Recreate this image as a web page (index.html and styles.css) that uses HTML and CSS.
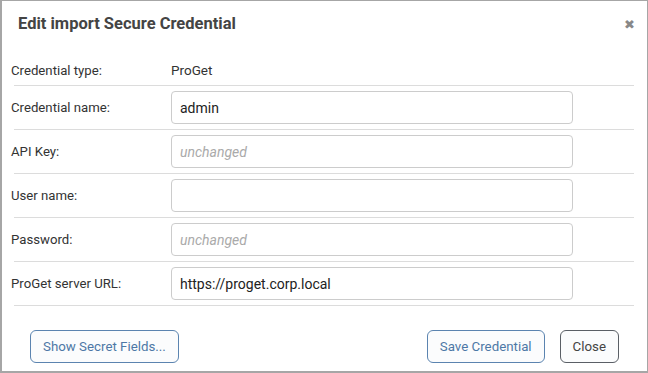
FILE: index.html
```html
<!DOCTYPE html>
<html>
<head>
	<meta charset="utf-8">
	<title>Edit import Secure Credential</title>
	<link rel="stylesheet" href="styles.css">
</head>
<body>
  <div class="dialog">
    <div class="dialog-header">
      <h2>Edit import Secure Credential</h2>
      <span class="close-x">&#x2716;</span>
    </div>

    <div class="dialog-body">
      <div class="row row-static">
        <label>Credential type:</label>
        <span class="value">ProGet</span>
      </div>
      <div class="row">
        <label for="cred_name">Credential name:</label>
        <input type="text" id="cred_name" value="admin">
      </div>
      <div class="row">
        <label for="api_key">API Key:</label>
        <input type="text" id="api_key" placeholder="unchanged">
      </div>
      <div class="row">
        <label for="user_name">User name:</label>
        <input type="text" id="user_name">
      </div>
      <div class="row">
        <label for="password">Password:</label>
        <input type="text" id="password" placeholder="unchanged">
      </div>
      <div class="row">
        <label for="server_url">ProGet server URL:</label>
        <input type="text" id="server_url" value="https://proget.corp.local">
      </div>
    </div>

    <div class="dialog-footer">
      <button class="btn btn-blue">Show Secret Fields...</button>
      <span class="spacer"></span>
      <button class="btn btn-blue">Save Credential</button>
      <button class="btn btn-gray">Close</button>
    </div>
  </div>
</body>
</html>
```

FILE: styles.css
```css
body {
	margin: 0;
	background-color: #fff;
	font-family: Roboto, 'Liberation Sans', sans-serif;
	color: #333;
}

.dialog {
	width: 648px;
	height: 373px;
	box-sizing: border-box;
	border: 1px solid #a6a6a6;
	border-left-width: 2px;
	border-bottom-width: 2px;
	background-color: #fff;
}

.dialog-header {
	display: flex;
	align-items: center;
	height: 45px;
	padding: 0 12px 0 16px;
}

.dialog-header h2 {
	flex: 1;
	margin: 0;
	font-size: 16.5px;
	font-weight: bold;
	color: #444;
}

.close-x {
	font-size: 13px;
	color: #888;
	margin-top: 1px;
}

.dialog-body {
	padding: 9px 13px 0 12px;
}

.row {
	display: flex;
	align-items: center;
	height: 43px;
	border-bottom: 1px solid #dcdcdc;
}

.row-static {
	height: 30px;
}

.row label {
	width: 157px;
	margin-left: -3px;
	margin-right: 3px;
	font-size: 13.2px;
	color: #333;
}

.row .value {
	font-size: 13.5px;
	color: #333;
}

.row input {
	width: 402px;
	height: 33px;
	box-sizing: border-box;
	border: 1px solid #ccc;
	border-radius: 4px;
	padding: 0 8px;
	font-family: Roboto, 'Liberation Sans', sans-serif;
	font-size: 14px;
	color: #222;
}

.row input::placeholder {
	font-style: italic;
	color: #aaa;
}

.dialog-footer {
	display: flex;
	align-items: center;
	gap: 15px;
	padding: 24px 28px 0 28px;
}

.spacer {
	flex: 1;
}

.btn {
	height: 33px;
	padding: 0 12px;
	border-radius: 6px;
	background-color: #fbfcfd;
	font-family: Roboto, 'Liberation Sans', sans-serif;
	font-size: 13.3px;
}

.btn-blue {
	border: 1px solid #5b84b0;
	color: #4d78a6;
}

.btn-gray {
	border: 1px solid #5a5f66;
	color: #444;
}
```
